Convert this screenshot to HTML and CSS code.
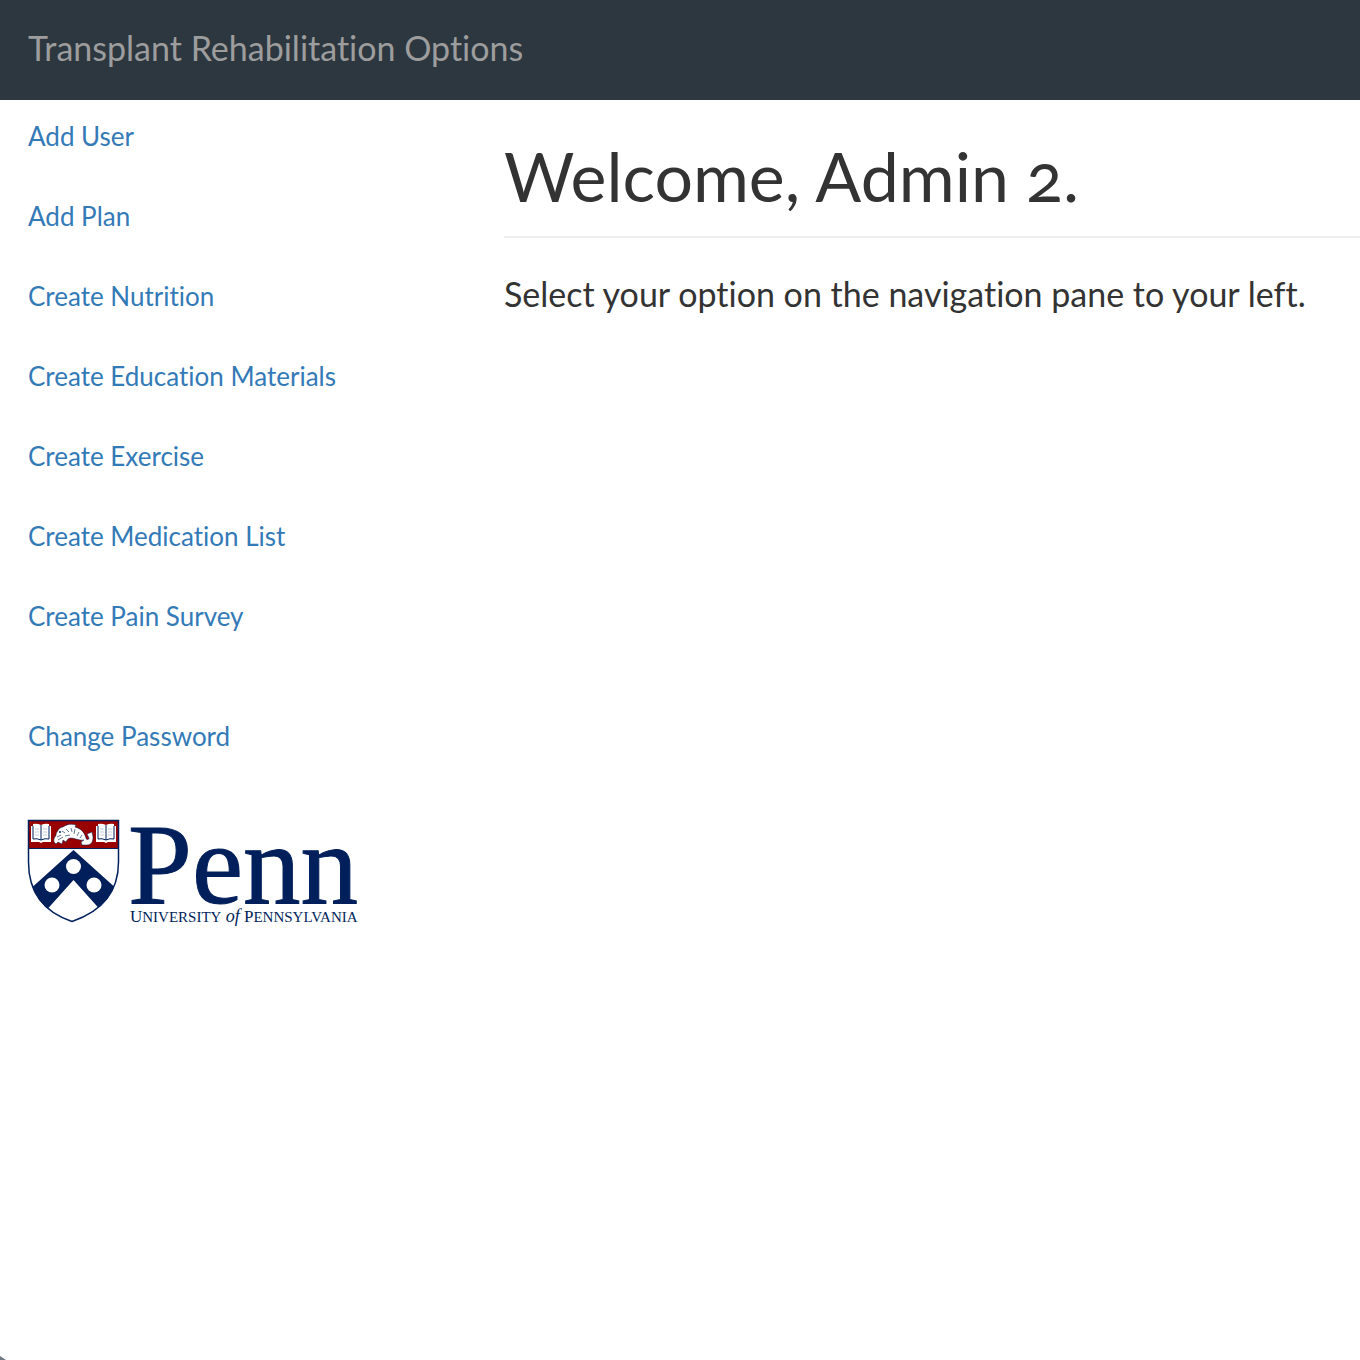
FILE: index.html
```html
<!DOCTYPE html>
<html lang="en">
<head>
<meta charset="utf-8">
<meta name="viewport" content="width=device-width, initial-scale=1">
<title>Transplant Rehabilitation Options</title>
<link rel="stylesheet" href="styles.css">
</head>
<body>
<header class="navbar"><a class="brand" href="#">Transplant Rehabilitation Options</a></header>
<div class="layout">
  <aside class="sidebar">
    <nav>
      <ul class="menu">
        <li><a href="#">Add User</a></li>
        <li><a href="#">Add Plan</a></li>
        <li><a href="#">Create Nutrition</a></li>
        <li><a href="#">Create Education Materials</a></li>
        <li><a href="#">Create Exercise</a></li>
        <li><a href="#">Create Medication List</a></li>
        <li><a href="#">Create Pain Survey</a></li>
        <li class="account"><a href="#">Change Password</a></li>
      </ul>
    </nav>
    <svg class="logo" viewBox="0 0 330 108" role="img" aria-label="Penn, University of Pennsylvania">
      <defs>
        <clipPath id="shield"><path d="M0 0H91V42C91 73 72 92 44 102C16 92 0 73 0 42Z"/></clipPath>
        <g id="book">
          <path d="M0 5H2V3Q6 2 10 4Q14 2 18 3V5H20V21H12L10 22L8 21H0Z" fill="#fff"/>
          <path d="M2 5V18Q6 17 10 19Q14 17 18 18V5M10 4V19" fill="none" stroke="#011f5b"/>
          <path d="M4 8H8M4 11H8M4 14H8M12 8H16M12 11H16M12 14H16" stroke="#c3cbdb"/>
        </g>
      </defs>
      <g clip-path="url(#shield)">
        <path d="M0 0H91V102H0Z" fill="#fff"/>
        <path d="M0 0H91V28H0Z" fill="#990000"/>
        <path d="M45.500 30L91 71L76 94L45.500 60L15 94L0 71Z" fill="#011f5b"/>
        <path d="M0 28.500H91" stroke="#011f5b"/>
        <circle cx="45.500" cy="46.500" r="7.500" fill="#fff"/>
        <circle cx="24" cy="65" r="7.500" fill="#fff"/>
        <circle cx="66" cy="65" r="7.500" fill="#fff"/>
        <use href="#book" x="3" y="1"/>
        <use href="#book" x="68" y="1"/>
        <path d="M26 22C25 17 29 16 28 14C30 10 32 7 35 7C38 5 42 3 48 5L47 7C55 9 57 15 58 18C58 20 61 20 61 18L59 14L64 12L65 17C65 22 63 25 59 25L54 25L53 22L56 20C52 21 46 18 43 18C40 18 39 20 38 22L35 20L34 24L30 22L28 24Z" fill="#fff" stroke="#011f5b" stroke-width=".5"/>
        <path d="M34 11L37 13M38 9L41 12M43 8L44 12M47 9L46 14M51 12L49 16M54 15L52 18M29 17L33 15M30 20L35 17M37 16L42 15" fill="none" stroke="#011f5b" stroke-width=".6"/>
        <circle cx="32" cy="12" r="1" fill="#011f5b"/>
      </g>
      <path d="M.5 .5H90.500V42C90.500 73 72 92 44 101.500C16 92 .5 73 .5 42Z" fill="none" stroke="#011f5b" stroke-width="1.500"/>
      <text class="logo-name" x="100" y="83">Penn</text>
      <text class="logo-school" x="102" y="102">U<tspan class="small">NIVERSITY</tspan> <tspan class="of">of</tspan> P<tspan class="small">ENNSYLVANIA</tspan></text>
    </svg>
  </aside>
  <main class="content">
    <h1>Welcome, Admin 2.</h1>
    <p>Select your option on the navigation pane to your left.</p>
  </main>
</div>
</body>
</html>
```
FILE: styles.css
```css
* { box-sizing: border-box; }

body {
  margin: 0;
  min-height: 100vh;
  background: #fff;
  color: #333;
  font: 26px/40px Lato, "Open Sans", sans-serif;
  font-variant-ligatures: none;
  font-variant-numeric: oldstyle-nums;
}

/* Rounded window edge at the bottom left corner. */
body::after {
  content: "";
  position: fixed;
  left: 0;
  bottom: 0;
  width: 6px;
  height: 4px;
  background: #6f7983;
  clip-path: polygon(0 0, 100% 100%, 0 100%);
}

a { color: #337ab7; text-decoration: none; }
a:hover { text-decoration: underline; }

.navbar {
  height: 100px;
  padding: 28px;
  background: #2d3740;
}

.navbar .brand {
  color: #9d9d9d;
  font-size: 34px;
}

.layout {
  display: grid;
  grid-template-columns: 35% 65%;
}

.sidebar { padding: 16px 28px; }

.menu {
  display: grid;
  gap: 40px;
  margin: 0;
  padding: 0;
  list-style: none;
}

.menu .account { padding-top: 40px; }

.logo {
  display: block;
  width: 330px;
  max-width: 100%;
  margin-top: 64px;
  overflow: visible;
}

.logo text {
  fill: #011f5b;
  font-family: "Liberation Serif", serif;
}

.logo .logo-name {
  font-size: 115px;
  stroke: #011f5b;
  stroke-width: 1px;
}

.logo .logo-school { font-size: 17px; }
.logo .small { font-size: 15px; }
.logo .of { font-size: 18px; font-style: italic; }

.content { padding: 36px 0 0 28px; }

.content h1 {
  margin: 0;
  padding-bottom: 20px;
  border-bottom: 2px solid #eee;
  font-size: 68px;
  font-weight: 400;
  line-height: 80px;
}

.content p {
  margin: 36px 0 0;
  font-size: 34px;
}
```
